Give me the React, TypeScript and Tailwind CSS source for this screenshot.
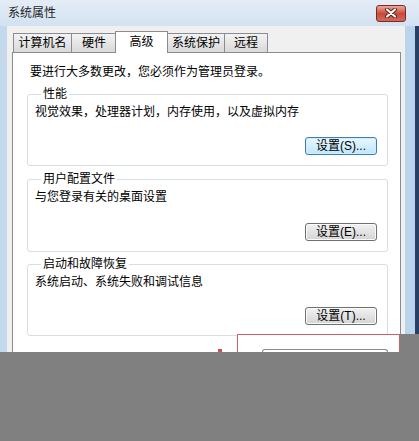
import React from "react";

const font = "font-['Liberation_Sans','Noto_Sans_CJK_SC',sans-serif]";

function SetButton({ label, primary }: { label: string; primary?: boolean }) {
  return (
    <button
      className={
        "h-[18px] w-[72px] rounded-[3px] border text-[12px] leading-[14px] text-black flex items-center justify-center " +
        (primary
          ? "border-[#3c7fb1] bg-gradient-to-b from-[#eaf6fd] to-[#bee6fd] shadow-[inset_0_0_0_1px_#cdeefb]"
          : "border-[#707070] bg-gradient-to-b from-[#f2f2f2] to-[#d4d4d4] shadow-[inset_0_0_0_1px_#fbfbfb]")
      }
    >
      {label}
    </button>
  );
}

function Group({
  title,
  text,
  button,
  primary,
  className,
  btnGap,
}: {
  title: string;
  text: string;
  button: string;
  primary?: boolean;
  className: string;
  btnGap: string;
}) {
  return (
    <fieldset className={"ml-[14px] mr-[12px] rounded-[3px] border border-[#d5dfe5] pl-[7px] pr-[10px] pb-[10px] " + className}>
      <legend className="ml-[6px] px-[2px] text-[12px] leading-[14px]">{title}</legend>
      <div className="mt-[4px] text-[12px] leading-[14px]">{text}</div>
      <div className={"flex justify-end " + btnGap}>
        <SetButton label={button} primary={primary} />
      </div>
    </fieldset>
  );
}

export default function App() {
  const tabs = ["计算机名", "硬件", "高级", "系统保护", "远程"];
  const widths = ["w-[59px]", "w-[46px]", "w-[53px]", "w-[58px]", "w-[44px]"];

  return (
    <div className={"relative w-[419px] h-[441px] overflow-hidden bg-[#c2d6ec] text-black " + font}>
      {/* title bar */}
      <div className="h-[26px] flex items-center justify-between pl-[8px] pr-[13px] bg-gradient-to-b from-[#e4edf7] to-[#d3e1f0]">
        <span className="text-[12px] leading-[14px] text-[#1e1e1e]">系统属性</span>
        <div className="w-[30px] h-[17px] rounded-[3px] border border-[#7a2a22] bg-gradient-to-b from-[#e8a89c] via-[#c94a3c] to-[#d06a5a] flex items-center justify-center">
          <svg width="14" height="10" viewBox="0 0 14 10">
            <path d="M3 1.5 L11 8.5 M11 1.5 L3 8.5" stroke="#5a1c16" strokeWidth="4" strokeLinecap="round" />
            <path d="M3 1.5 L11 8.5 M11 1.5 L3 8.5" stroke="#ffffff" strokeWidth="2.2" strokeLinecap="round" />
          </svg>
        </div>
      </div>

      <div className="flex h-[415px]">
        <div className="w-[7px] bg-[#c4d8ee]" />
        {/* client */}
        <div className="w-[398px] bg-[#f0f0f0] pt-[5px] pl-[5px] pr-[4px]">
          <div className="relative z-10 flex items-end h-[21px] pl-px">
            {tabs.map((t, i) =>
              i === 2 ? (
                <div
                  key={t}
                  className={"-mb-px -mx-[1px] h-[22px] border border-b-0 border-[#898c95] bg-white flex items-center justify-center text-[12px] leading-[14px] pb-[2px] " + widths[i]}
                >
                  {t}
                </div>
              ) : (
                <div
                  key={t}
                  className={"h-[19px] border border-b-0 border-[#898c95] bg-gradient-to-b from-[#f3f3f3] to-[#d9d9d9] flex items-center justify-center text-[12px] leading-[14px] -mr-px " + widths[i]}
                >
                  {t}
                </div>
              )
            )}
          </div>
          <div className="h-[400px] border border-[#898c95] bg-white pt-[12px]">
            <div className="pl-[17px] text-[12px] leading-[14px]">要进行大多数更改，您必须作为管理员登录。</div>
            <Group
              title="性能"
              text="视觉效果，处理器计划，内存使用，以及虚拟内存"
              button="设置(S)..."
              primary
              className="mt-[8px]"
              btnGap="mt-[18px]"
            />
            <Group
              title="用户配置文件"
              text="与您登录有关的桌面设置"
              button="设置(E)..."
              className="mt-[6px]"
              btnGap="mt-[19px]"
            />
            <Group
              title="启动和故障恢复"
              text="系统启动、系统失败和调试信息"
              button="设置(T)..."
              className="mt-[5px]"
              btnGap="mt-[18px]"
            />
          </div>
        </div>
        <div className="w-[10px] bg-[#bcd3ec]" />
        <div className="w-[4px] bg-[#2a3f66]" />
      </div>

      {/* overlays covering the lower part of the screenshot */}
      <div className="absolute left-[237px] top-[334px] w-[163px] h-[18px] border border-b-0 border-[#c86464] bg-white">
        <div className="absolute left-[24px] top-[14px] w-[126px] h-[6px] rounded-t-[3px] border border-b-0 border-[#8a8a8a]" />
      </div>
      <div className="absolute left-[218px] top-[349px] w-[4px] h-[3px] bg-[#d05050]" />
      <div className="absolute left-[400px] top-[334px] w-[19px] h-[18px] bg-[#808080]" />
      <div className="absolute left-0 top-[352px] w-[419px] h-[89px] bg-[#808080]" />
    </div>
  );
}
